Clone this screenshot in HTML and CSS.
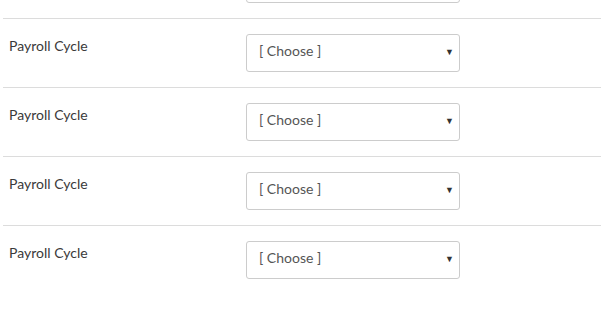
FILE: index.html
```html
<!DOCTYPE html>
<html>
<head>
<meta charset="utf-8">
<link rel="stylesheet" href="styles.css">
</head>
<body>
<div class="form">
  <div class="row first">
    <div class="label"></div>
    <div class="select"><span class="value"></span><span class="arrow"></span></div>
  </div>
  <div class="row">
    <div class="label">Payroll Cycle</div>
    <div class="select"><span class="value">[ Choose ]</span><span class="arrow">▼</span></div>
  </div>
  <div class="row">
    <div class="label">Payroll Cycle</div>
    <div class="select"><span class="value">[ Choose ]</span><span class="arrow">▼</span></div>
  </div>
  <div class="row">
    <div class="label">Payroll Cycle</div>
    <div class="select"><span class="value">[ Choose ]</span><span class="arrow">▼</span></div>
  </div>
  <div class="row">
    <div class="label">Payroll Cycle</div>
    <div class="select"><span class="value">[ Choose ]</span><span class="arrow">▼</span></div>
  </div>
</div>
</body>
</html>
```
FILE: styles.css
```css
html, body {
  margin: 0;
  padding: 0;
  background: #fff;
  overflow: hidden;
}
body {
  font-family: Lato, "Liberation Sans", sans-serif;
  font-size: 14px;
  color: #333;
  padding-top: 1px;
}
.form {
  margin: -51px 2px 0 3px;
}
.row {
  display: flex;
  align-items: flex-start;
  padding: 15px 0 15px 0;
  border-top: 1px solid #dcdcdc;
}
.row.first {
  border-top: none;
}
.label {
  width: 243px;
  padding-left: 6px;
  padding-top: 3px;
  box-sizing: border-box;
  line-height: 17px;
  color: #3a3a3a;
}
.select {
  width: 214px;
  height: 38px;
  box-sizing: border-box;
  border: 1px solid #ccc;
  border-radius: 3px;
  display: flex;
  align-items: center;
  justify-content: space-between;
  padding: 0 5px 6px 12px;
  color: #555;
  font-size: 14px;
}
.arrow {
  font-size: 9px;
  color: #333;
  padding-top: 3px;
}
```
